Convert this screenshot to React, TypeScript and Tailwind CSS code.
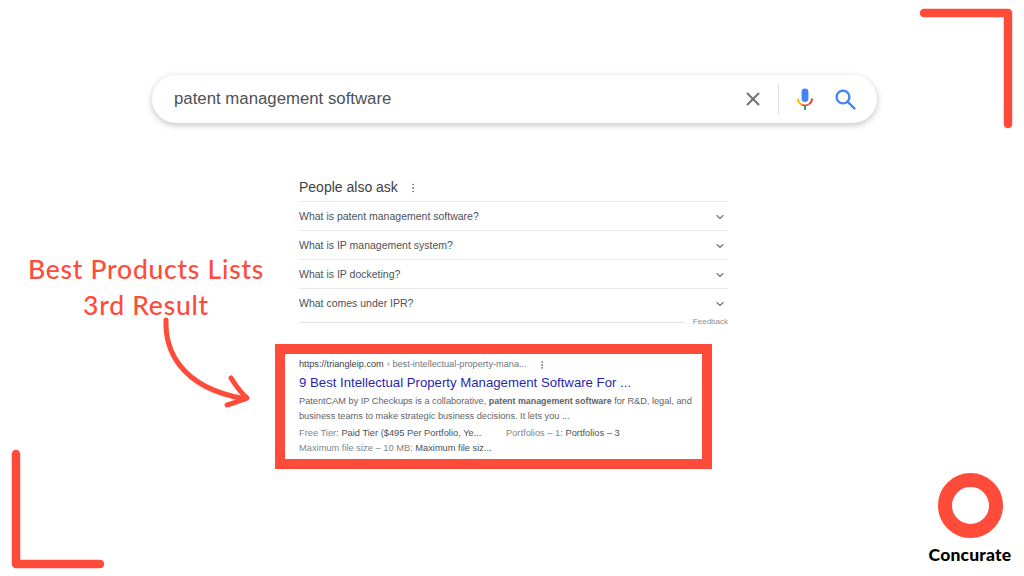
import React from 'react';
import { X, ChevronDown, EllipsisVertical } from 'lucide-react';

const QUESTIONS = [
  'What is patent management software?',
  'What is IP management system?',
  'What is IP docketing?',
  'What comes under IPR?',
];

const App: React.FC = () => {
  return (
    <div className="relative w-[1024px] h-[576px] overflow-hidden bg-white font-['Liberation_Sans',Arial,sans-serif]">
      {/* Corner marks */}
      <svg className="absolute left-[918px] top-[7px]" width="98" height="123" viewBox="0 0 98 123" fill="none">
        <path d="M6 6H90V117" stroke="#ff4b3a" strokeWidth="8.5" strokeLinecap="round" strokeLinejoin="round" />
      </svg>
      <svg className="absolute left-[9px] top-[448px]" width="98" height="123" viewBox="0 0 98 123" fill="none">
        <path d="M7 6V116H91" stroke="#ff4b3a" strokeWidth="8.5" strokeLinecap="round" strokeLinejoin="round" />
      </svg>

      {/* Callout */}
      <div className="absolute left-[6px] top-[251px] w-[280px] text-center font-['Lato',sans-serif] font-medium text-[26.5px] leading-[36px] tracking-[0.75px] text-[#ff4b3a]">
        <div>Best Products Lists</div>
        <div>3rd Result</div>
      </div>
      <svg className="absolute left-[155px] top-[315px]" width="100" height="95" viewBox="0 0 100 95" fill="none">
        <path d="M11 5C10 32 22 72 90 84" stroke="#ff4b3a" strokeWidth="5" strokeLinecap="round" />
        <path d="M76 63C81 71 86 78 92 83C85 86 78 88 72 90" stroke="#ff4b3a" strokeWidth="5" strokeLinecap="round" strokeLinejoin="round" />
      </svg>

      {/* Logo */}
      <div className="absolute left-[926px] top-[473px] w-[88px] flex flex-col items-center">
        <div className="w-[65px] h-[65px] rounded-full border-[14px] border-[#ff4b3a]" />
        <div className="mt-[5px] font-['Lato',sans-serif] font-black text-[17.5px] leading-[24px] tracking-[0.2px] text-black whitespace-nowrap">Concurate</div>
      </div>

      {/* Search bar */}
      <div className="absolute left-[152px] top-[75px] w-[725px] h-[48px] rounded-full bg-white shadow-[0_2px_6px_rgba(32,33,36,0.28)] flex items-center pl-[22px] pr-[20px]">
        <span className="flex-1 text-[16.8px] text-[#4d5156]">patent management software</span>
        <X className="w-[22px] h-[22px] text-[#70757a] mr-[14px]" strokeWidth={2.2} />
        <div className="w-px h-[30px] bg-[#dfe1e5] mr-[14px]" />
        <svg className="w-[24px] h-[24px] mr-[16px]" viewBox="0 0 24 24" fill="none">
          <rect x="8.6" y="1.5" width="6.8" height="13.5" rx="3.4" fill="#4285f4" />
          <path d="M5 11.5a7 7 0 0 0 3.5 6" stroke="#fbbc04" strokeWidth="2" />
          <path d="M8.5 17.5a7 7 0 0 0 7 0" stroke="#ea4335" strokeWidth="2" />
          <path d="M15.5 17.5a7 7 0 0 0 3.5-6" stroke="#ea4335" strokeWidth="2" />
          <rect x="11" y="19" width="2" height="4" fill="#34a853" />
        </svg>
        <svg className="w-[24px] h-[24px]" viewBox="0 0 24 24" fill="none" stroke="#4285f4" strokeWidth="2.4">
          <circle cx="10" cy="10" r="6.4" />
          <path d="M14.8 14.8L21.5 21.5" strokeLinecap="round" />
        </svg>
      </div>

      {/* People also ask */}
      <div className="absolute left-[299px] top-[174px] w-[429px]">
        <div className="h-[27px] flex items-center text-[14px] text-[#3c4043]">
          People also ask
          <EllipsisVertical className="ml-[9px] w-[12px] h-[12px] text-[#70757a]" />
        </div>
        {QUESTIONS.map((q) => (
          <div key={q} className="h-[29px] border-t border-[#ebebeb] flex items-center justify-between pr-[2px] pt-[2px] text-[10.5px] text-[#4d5156]">
            <span>{q}</span>
            <ChevronDown className="w-[12px] h-[12px] text-[#70757a]" strokeWidth={2.2} />
          </div>
        ))}
        <div className="-mt-[1px] flex items-center">
          <div className="flex-1 h-px bg-[#e3e3e3]" />
          <span className="ml-[9px] text-[8px] text-[#8a8d91]">Feedback</span>
        </div>
      </div>

      {/* Highlighted result */}
      <div className="absolute left-[275px] top-[344px] w-[437px] h-[125px] border-[10px] border-[#ff4b3a] pl-[14px] pt-[4px] text-[#5f6368] whitespace-nowrap">
        <div className="h-[13px] flex items-center text-[9.2px] leading-[13px]">
          <span className="text-[#3c4043]">https://triangleip.com</span>
          <span className="ml-[3px] text-[#70757a]">› best-intellectual-property-mana...</span>
          <EllipsisVertical className="ml-[10px] w-[10px] h-[10px] text-[#5f6368]" />
        </div>
        <div className="mt-[2px] text-[13.2px] leading-[19px] text-[#2a1fb0]">9 Best Intellectual Property Management Software For ...</div>
        <div className="mt-[2px] text-[9.2px] leading-[14.5px]">
          <div>
            PatentCAM by IP Checkups is a collaborative, <b className="text-[8.9px] text-[#5f6368]">patent management software</b> for R&amp;D, legal, and
          </div>
          <div>business teams to make strategic business decisions. It lets you ...</div>
        </div>
        <div className="mt-[3px] text-[9.3px] leading-[14.5px] text-[#80868b]">
          <div className="flex">
            <span className="w-[207px]">Free Tier: <span className="text-[#4d5156]">Paid Tier ($495 Per Portfolio, Ye...</span></span>
            <span>Portfolios – 1: <span className="text-[#4d5156]">Portfolios – 3</span></span>
          </div>
          <div>Maximum file size – 10 MB: <span className="text-[#4d5156]">Maximum file siz...</span></div>
        </div>
      </div>
    </div>
  );
};

export default App;
